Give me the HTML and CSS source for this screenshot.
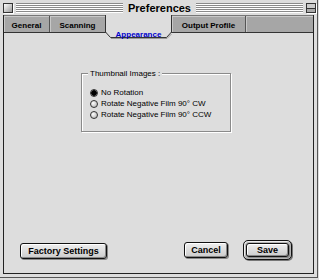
FILE: index.html
```html
<!DOCTYPE html>
<html lang="en">

<head>
    <meta charset="UTF-8" />
    <title>Preferences</title>
    <link rel="stylesheet" href="styles.css">
</head>

<body>
    <div class="window">
        <div class="titlebar">
            <span class="box"></span>
            <span class="stripes"></span>
            <span class="title">Preferences</span>
            <span class="stripes"></span>
            <span class="box collapse"></span>
        </div>

        <div class="panel">
            <div class="tabs">
                <div class="tab tab-general">General</div>
                <div class="tab tab-scanning">Scanning</div>
                <div class="tab tab-appearance selected">
                    <svg class="tab-shape" width="67" height="24" viewBox="0 0 67 24">
                        <polygon points="0.5,0 66.5,0 66.5,17 61.5,22.5 5.5,22.5 0.5,17" fill="#dddddd" />
                        <polyline points="0.5,0 0.5,17 5.5,22.5 61.5,22.5 66.5,17 66.5,0" fill="none" stroke="#333" stroke-width="1" />
                        <polyline points="6,23.5 62,23.5 66.5,19" fill="none" stroke="#999" stroke-width="1" />
                    </svg>
                    <span class="tab-label">Appearance</span>
                </div>
                <div class="tab tab-output">Output Profile</div>
                <div class="tab tab-rest"></div>
            </div>

            <div class="content">
                <div class="group">
                    <div class="group-label">Thumbnail Images :</div>
                    <div class="radio-row"><span class="radio checked"></span>No Rotation</div>
                    <div class="radio-row"><span class="radio"></span>Rotate Negative Film 90° CW</div>
                    <div class="radio-row"><span class="radio"></span>Rotate Negative Film 90° CCW</div>
                </div>

                <div class="buttons">
                    <button class="btn btn-factory">Factory Settings</button>
                    <button class="btn btn-cancel">Cancel</button>
                    <div class="default-ring">
                        <button class="btn btn-save">Save</button>
                    </div>
                </div>
            </div>
        </div>
    </div>
</body>

</html>
```

FILE: styles.css
```css
body {
    margin: 0;
    background: #dddddd;
    font-family: "Liberation Sans", Arial, sans-serif;
    color: #000;
}

.window {
    width: 318px;
    height: 278px;
    box-sizing: border-box;
    display: flex;
    flex-direction: column;
    padding: 0 3px 3px 3px;
    border-right: 1px solid #555;
    border-bottom: 1px solid #555;
    background: #dddddd;
}

/* barre de titre */
.titlebar {
    height: 15px;
    display: flex;
    align-items: center;
    gap: 3px;
    margin: 0 -2px 0 0;
}

.box {
    width: 8px;
    height: 8px;
    border: 1px solid #333;
    background: linear-gradient(135deg, #fff, #999);
    box-shadow: 1px 1px 0 #fff;
    flex: none;
}

.collapse {
    background: linear-gradient(to bottom, #ccc 0 4px, #333 4px 5px, #aaa 5px);
}

.stripes {
    flex: 1;
    height: 10px;
    background: repeating-linear-gradient(to bottom, #8a8a8a 0 1px, #ffffff 1px 2px);
}

.title {
    font-weight: bold;
    font-size: 11px;
    padding: 0 2px;
}

/* cadre */
.panel {
    flex: 1;
    display: flex;
    flex-direction: column;
    border: 1px solid #222;
    border-top: none;
}

.tabs {
    height: 16px;
    display: flex;
    background: #a6a6a6;
    border-top: 1px solid #777;
    border-bottom: 1px solid #333;
}

.tab {
    box-sizing: border-box;
    height: 16px;
    font-size: 8px;
    font-weight: bold;
    text-align: center;
    padding-top: 5px;
    border-right: 1px solid #555;
    box-shadow: inset 1px 1px 0 #c8c8c8;
    flex: none;
}

.tab-general {
    width: 46px;
}

.tab-scanning {
    width: 56px;
}

.tab-appearance {
    width: 66px;
}

.tab-output {
    width: 74px;
}

.tab-rest {
    flex: 1;
    border-right: none;
}

.tab.selected {
    position: relative;
    z-index: 1;
    height: 24px;
    margin-left: -1px;
    width: 67px;
    border: none;
    box-shadow: none;
    padding-top: 0;
}

.tab-shape {
    position: absolute;
    left: 0;
    top: -1px;
}

.tab-label {
    position: relative;
    display: block;
    padding-top: 14px;
    color: #0000cc;
}

/* contenu */
.content {
    flex: 1;
    display: flex;
    flex-direction: column;
    padding: 0 21px 13px 16px;
}

.group {
    margin-top: 40px;
    margin-left: 61px;
    width: 148px;
    height: 57px;
    border: 1px solid #8a8a8a;
    box-shadow: 1px 1px 0 #fff, inset 1px 1px 0 #fff;
    font-size: 8px;
}

.group-label {
    display: inline-block;
    margin: -6px 0 0 6px;
    padding: 0 2px;
    background: #dddddd;
    line-height: 11px;
    vertical-align: top;
}

.radio-row {
    display: flex;
    align-items: center;
    gap: 3px;
    height: 11px;
    padding-left: 8px;
}

.group-label + .radio-row {
    margin-top: 4px;
}

.radio {
    width: 6px;
    height: 6px;
    border-radius: 50%;
    border: 1px solid #333;
    background: radial-gradient(circle at 35% 35%, #fff, #aaa);
}

.radio.checked {
    background: radial-gradient(circle at 50% 50%, #000 0 2.5px, #888 3px);
}

.buttons {
    margin-top: auto;
    display: flex;
    align-items: center;
}

.btn {
    font-family: "Liberation Sans", Arial, sans-serif;
    font-size: 9px;
    font-weight: bold;
    color: #000;
    height: 16px;
    padding: 0;
    border: 1px solid #111;
    border-radius: 3px;
    background: linear-gradient(to bottom, #eee, #ccc);
    box-shadow: inset 1px 1px 0 #fff, inset -1px -1px 0 #888, 1px 1px 0 #888;
}

.btn-factory {
    width: 87px;
    margin-right: auto;
    margin-top: 2px;
}

.btn-cancel {
    width: 44px;
}

.default-ring {
    margin-left: 15px;
    width: 49px;
    height: 20px;
    box-sizing: border-box;
    padding: 2px;
    border: 1px solid #111;
    border-radius: 5px;
    background: #b5b5b5;
    box-shadow: inset 1px 1px 0 #eee, 1px 1px 0 #777;
}

.btn-save {
    width: 43px;
    height: 14px;
    display: block;
}
```
